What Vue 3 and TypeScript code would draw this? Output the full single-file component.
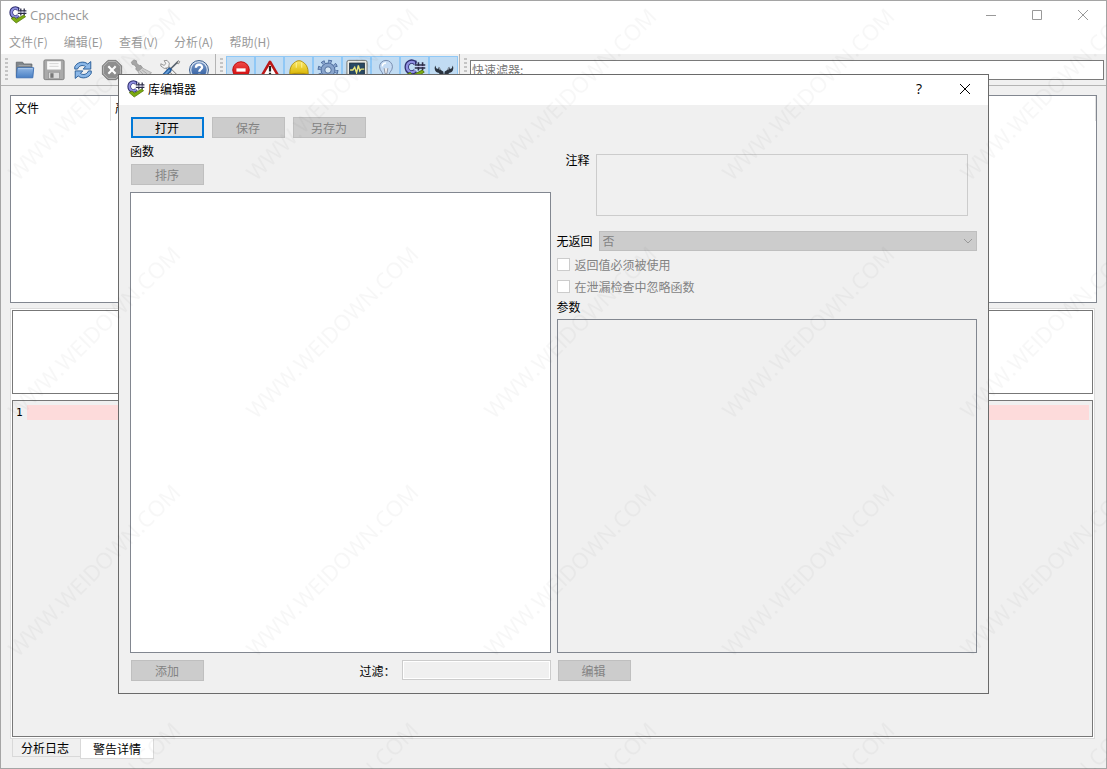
<script setup lang="ts">
import { ref } from 'vue'

interface ToolItem {
  icon: string
  label: string
}

const menus: string[] = ['文件(F)', '编辑(E)', '查看(V)', '分析(A)', '帮助(H)']

const actions: ToolItem[] = [
  { icon: 'folder', label: '打开' },
  { icon: 'save', label: '保存' },
  { icon: 'refresh', label: '重新检查' },
  { icon: 'stop', label: '停止' },
  { icon: 'brush', label: '清除' },
  { icon: 'tools', label: '首选项' },
  { icon: 'help', label: '帮助' },
]

const filters: ToolItem[] = [
  { icon: 'error', label: '错误' },
  { icon: 'warning', label: '警告' },
  { icon: 'helmet', label: '风格' },
  { icon: 'gear', label: '可移植性' },
  { icon: 'monitor', label: '性能' },
  { icon: 'bulb', label: '信息' },
  { icon: 'logo', label: 'C++' },
  { icon: 'bug', label: 'Cppcheck' },
]

const quickFilter = ref('')
const comment = ref('')
const filter = ref('')
const noReturn = ref('否')
</script>

<template>
  <svg class="defs" aria-hidden="true">
    <defs>
      <linearGradient id="g-blue" x1="0" y1="0" x2="0" y2="1">
        <stop offset="0" stop-color="#8fb5e3" /><stop offset="1" stop-color="#4a80c4" />
      </linearGradient>
      <linearGradient id="g-navy" x1="0" y1="0" x2="0" y2="1">
        <stop offset="0" stop-color="#7595c5" /><stop offset="1" stop-color="#2c5ba0" />
      </linearGradient>
      <linearGradient id="g-red" x1="0" y1="0" x2="0" y2="1">
        <stop offset="0" stop-color="#f04a4a" /><stop offset="1" stop-color="#cc0000" />
      </linearGradient>
      <linearGradient id="g-yellow" x1="0" y1="0" x2="0" y2="1">
        <stop offset="0" stop-color="#fbe96a" /><stop offset="1" stop-color="#d9b400" />
      </linearGradient>
    </defs>
    <symbol id="i-logo" viewBox="0 0 18 18">
      <path d="M9.4 3.6C6.5 .5 2.2 2.5 2.2 6.6S6.5 12.6 9.4 9.6" fill="none" stroke="#2f2f70" stroke-width="3.6" />
      <path d="M9.2 3.6C6.5 1 2.4 2.8 2.4 6.6S6.5 12 9.2 9.5" fill="none" stroke="#8f90e0" stroke-width="1.9" />
      <path d="M9.6 1.2v3.4" stroke="#2f2f70" stroke-width="1.2" />
      <path d="M11.8 2.6v6.8M15.2 2.6v6.8M8.8 4.9h8.6M8.8 7.3h8.6" stroke="#2c2c48" stroke-width="1.3" />
      <path d="M10.2 6.1h6.4" stroke="#c9c9ee" stroke-width=".8" />
      <path d="M2.2 12.6 5 10.9l2.4 2.2 7.4-4 1.8 1.6L7.2 17z" fill="#7cab12" stroke="#4f7209" stroke-width=".7" />
    </symbol>
    <symbol id="i-folder" viewBox="0 0 24 24">
      <path d="M2.5 19V3.5h7l1 2h9V19z" fill="#80868b" stroke="#666b70" />
      <path d="M5 7h13" stroke="#a9adb1" />
      <path d="M3.5 9.5h18L20.5 20.5h-18z" fill="url(#g-blue)" stroke="#3c6fb2" />
      <path d="M4.5 10.5h16" stroke="#b5d0ef" />
    </symbol>
    <symbol id="i-save" viewBox="0 0 24 24">
      <rect x="1" y="1" width="22" height="21.5" rx="1.5" fill="#aaa" stroke="#7d7d7d" />
      <rect x="4.5" y="2.5" width="15" height="9" fill="#fafafa" />
      <path d="M7 5h10M7 8h10" stroke="#d2d2d2" />
      <path d="M6 14.5h12v7H6z" fill="#dadada" stroke="#888" stroke-width=".7" />
      <rect x="8" y="15.5" width="3.5" height="5" fill="#777" />
    </symbol>
    <symbol id="i-refresh" viewBox="0 0 24 24">
      <path d="M3 11V8.5C5 3.8 12.5 1.4 17.2 5.5L20.5 2.8V11h-8.3l2.6-2.7C11.5 5.9 7.5 7.3 6 11z" fill="#8bb7e7" stroke="#245995" />
      <path d="M21 13v2.5c-2 4.7-9.5 7.1-14.2 3L3.5 21.2V13h8.3l-2.6 2.7c3.3 2.4 7.3 1 8.8-2.7z" fill="#8bb7e7" stroke="#245995" />
    </symbol>
    <symbol id="i-stop" viewBox="0 0 24 24">
      <path d="M7.5 1.5h9l6 6v9l-6 6h-9l-6-6v-9z" fill="#8f8f8f" stroke="#767676" />
      <path d="M8 2.7h8l5.3 5.3v8L16 21.3H8L2.7 16V8z" fill="none" stroke="#b8b8b8" />
      <path d="m8 8 8 8M16 8l-8 8" stroke="#fff" stroke-width="2.4" />
    </symbol>
    <symbol id="i-brush" viewBox="0 0 24 24">
      <path d="M1.5 3.5 4 1l3 1 .5 3L10 7l2 .2 1.5 2.3-4.6 4-2.6-2.2.5-2.3-2-2.5-2.3-.5z" fill="#a6a6a6" stroke="#8e8e8e" stroke-width=".8" />
      <path d="m8.7 13.7 4.7-4L23.5 15 13 22z" fill="#cfcfcf" stroke="#a2a2a2" stroke-width=".8" />
      <path d="m11 13 4.5 5M13.2 12l5.3 4" stroke="#aaa" />
    </symbol>
    <symbol id="i-tools" viewBox="0 0 24 24">
      <path d="m8 8 12 12" stroke="#777" stroke-width="4.4" stroke-linecap="round" />
      <path d="m8 8 12 12" stroke="#f0f0f0" stroke-width="2.8" stroke-linecap="round" />
      <path d="M2 5.2 5.5 7l2-2-1.9-3.2 3.2-.3 2.5 3-.8 4.8-4.7 1L2 7.7z" fill="#f4f4f4" stroke="#777" stroke-width=".8" />
      <path d="m21 2.5-8.8 8.7" stroke="#596470" stroke-width="1.8" />
      <path d="m21.2 1.7 1.5 1.3-1.3 2.2-1.9-.4z" fill="#ddd" stroke="#666" stroke-width=".7" />
      <path d="M11.5 12 5 18.8" stroke="#235998" stroke-width="5" stroke-linecap="round" />
      <path d="M11 12.4 5 18.5" stroke="#629bd5" stroke-width="2.2" stroke-linecap="round" />
    </symbol>
    <symbol id="i-help" viewBox="0 0 24 24">
      <circle cx="12" cy="12" r="10.3" fill="#d6e1ef" stroke="#294f83" />
      <circle cx="12" cy="12" r="8.4" fill="url(#g-navy)" />
      <path d="M8.6 9.5c.2-4.2 6.8-4.2 6.8-.6 0 2.2-3.1 2.3-3.1 5.1M12.3 16v2.3" fill="none" stroke="#fff" stroke-width="2.5" />
    </symbol>
    <symbol id="i-error" viewBox="0 0 24 24">
      <circle cx="12" cy="12" r="9" fill="url(#g-red)" stroke="#b00" />
      <rect x="7" y="10.2" width="10" height="3.6" fill="#fff" />
    </symbol>
    <symbol id="i-warning" viewBox="0 0 24 24">
      <path d="M12 3 22 20H2z" fill="#fff" stroke="#bb1717" stroke-width="2.8" stroke-linejoin="round" />
      <path d="M12 7.5v6M12 15v2" stroke="#222" stroke-width="2.4" />
    </symbol>
    <symbol id="i-helmet" viewBox="0 0 24 24">
      <path d="M2 17C1.5 8 5.5 4.5 8.5 3c1-1.5 6-1.5 7 0 3 1.5 7 5 6.5 14z" fill="url(#g-yellow)" stroke="#ad8b0b" />
      <path d="M9 3.5v6M15 3.5v6" fill="none" stroke="#fff4a5" />
      <path d="M1.5 17c6-2 15-2 21 0v2.5c-6 2-15 2-21 0z" fill="#ddb800" stroke="#ad8b0b" />
    </symbol>
    <symbol id="i-gear" viewBox="0 0 24 24">
      <circle cx="12" cy="12" r="9.2" fill="none" stroke="#3f5f92" stroke-width="4.2" stroke-dasharray="3.6 3.625" />
      <circle cx="12" cy="12" r="7.6" fill="#88a4cc" stroke="#3f5f92" />
      <circle cx="12" cy="12" r="9" fill="none" stroke="#88a4cc" stroke-width="3" stroke-dasharray="2.4 4.67" stroke-dashoffset="-.5" />
      <circle cx="12" cy="12" r="3.5" fill="#d8e8f5" stroke="#486896" />
    </symbol>
    <symbol id="i-monitor" viewBox="0 0 24 24">
      <rect x="1" y="1.5" width="22" height="20" rx="2" fill="#ecece6" stroke="#6d706c" />
      <rect x="4" y="4.5" width="16" height="14" fill="#294965" stroke="#17293a" />
      <path d="M4.5 12h3l2-3 2 6 2-8 1.5 6 1.5-2H20" fill="none" stroke="#efea7b" stroke-width="1.5" />
    </symbol>
    <symbol id="i-bulb" viewBox="0 0 24 24">
      <path d="M8.5 17c0-3-3.5-4.2-3.5-8.5a7 7 0 0 1 14 0c0 4.3-3.5 5.5-3.5 8.5z" fill="#c5dbf4" stroke="#7387aa" />
      <path d="M8 8a4 4 0 0 1 4-3.7" fill="none" stroke="#fff" stroke-width="1.6" />
      <path d="m10 10 1 6h2l1-6M8.5 18h7v3h-7z" fill="#eee" stroke="#8a91a0" />
    </symbol>
    <symbol id="i-bug" viewBox="0 0 24 24">
      <path d="M2.5 7C.8 10.500 2.500 14.500 6 15l4 4 2-1-.8-4.500L8.500 12 6.500 8.500l-1 2.500-2-.8z" fill="#2b3440" />
      <path d="M21.500 7c1.700 3.500 0 7.500-3.500 8l-4 4-2-1 .8-4.500 2.700-1.500 2-3.500 1 2.500 2-.8z" fill="#2b3440" />
      <path d="m6.500 9 1.500 3M17.500 9 16 12" stroke="#8996a3" stroke-width="1.500" />
    </symbol>
  </svg>

  <main class="window">
    <header class="titlebar">
      <svg class="logo"><use href="#i-logo" /></svg>
      <h1>Cppcheck</h1>
      <button class="caption" aria-label="最小化"><svg viewBox="0 0 12 12"><path d="M1 6.5h10" /></svg></button>
      <button class="caption" aria-label="最大化"><svg viewBox="0 0 12 12"><path d="M1.5 1.5h9v9h-9z" /></svg></button>
      <button class="caption" aria-label="关闭"><svg viewBox="0 0 12 12"><path d="m1 1 10 10M11 1 1 11" /></svg></button>
    </header>

    <nav class="menubar">
      <button v-for="m in menus" :key="m">{{ m }}</button>
    </nav>

    <div class="toolbar">
      <span class="grip"></span>
      <button v-for="a in actions" :key="a.icon" class="tool" :aria-label="a.label">
        <svg><use :href="'#i-' + a.icon" /></svg>
      </button>
      <span class="divider"></span>
      <span class="grip"></span>
      <button v-for="f in filters" :key="f.icon" class="tool checked" aria-pressed="true" :aria-label="f.label">
        <svg><use :href="'#i-' + f.icon" /></svg>
      </button>
      <span class="divider"></span>
      <span class="grip"></span>
      <input v-model="quickFilter" class="quick" type="text" placeholder="快速滤器:" aria-label="快速滤器" />
    </div>

    <section class="workspace">
      <div class="results">
        <table>
          <thead>
            <tr><th class="file">文件</th><th>严重性</th></tr>
          </thead>
        </table>
      </div>
      <div class="details">
        <div class="message"></div>
        <div class="code">
          <span class="line-no">1</span>
          <span class="line"></span>
        </div>
      </div>
      <div class="tabs" role="tablist">
        <button role="tab" aria-selected="false">分析日志</button>
        <button role="tab" aria-selected="true" class="active">警告详情</button>
      </div>
    </section>
  </main>

  <section class="dialog" role="dialog" aria-labelledby="dialog-title">
    <header class="titlebar">
      <svg class="logo"><use href="#i-logo" /></svg>
      <h2 id="dialog-title">库编辑器</h2>
      <button class="caption help" aria-label="帮助">?</button>
      <button class="caption" aria-label="关闭"><svg viewBox="0 0 12 12"><path d="m1 1 10 10M11 1 1 11" /></svg></button>
    </header>
    <div class="dialog-body">
      <div class="button-row">
        <button class="push default">打开</button>
        <button class="push" disabled>保存</button>
        <button class="push" disabled>另存为</button>
      </div>
      <div class="columns">
        <div class="column">
          <span class="functions">函数</span>
          <button class="push inset" disabled>排序</button>
          <div class="list functions-list"></div>
          <div class="footer">
            <button class="push inset" disabled>添加</button>
            <label class="filter" for="filter">过滤：</label>
            <input id="filter" v-model="filter" class="filter-box" type="text" disabled />
          </div>
        </div>
        <div class="column">
          <div class="comment-row">
            <label for="comment">注释</label>
            <textarea id="comment" v-model="comment" disabled></textarea>
          </div>
          <div class="return-row">
            <label for="noreturn">无返回</label>
            <div class="combo">
              <select id="noreturn" v-model="noReturn" disabled>
                <option>否</option>
                <option>是</option>
              </select>
              <svg viewBox="0 0 10 6"><path d="m1 1 4 4 4-4" /></svg>
            </div>
          </div>
          <label class="check"><input type="checkbox" disabled />返回值必须被使用</label>
          <label class="check"><input type="checkbox" disabled />在泄漏检查中忽略函数</label>
          <span class="arguments">参数</span>
          <div class="list"></div>
          <div class="footer">
            <button class="push inset" disabled>编辑</button>
          </div>
        </div>
      </div>
    </div>
  </section>

  <svg class="watermark" aria-hidden="true">
    <defs>
      <pattern id="mark" width="238" height="238" patternUnits="userSpaceOnUse">
        <text transform="translate(18 182) rotate(-45)">WWW.WEIDOWN.COM</text>
      </pattern>
    </defs>
    <rect width="100%" height="100%" fill="url(#mark)" />
  </svg>
</template>

<style>
body {
  margin: 0;
  background: #efefef;
  overflow: hidden;
}
</style>

<style scoped>
.window,
.dialog,
.window *,
.dialog * {
  box-sizing: border-box;
}
.window,
.dialog {
  font: 12px/16px "Noto Sans CJK SC", sans-serif;
  color: #000;
  background: #f0f0f0;
}
button,
input,
select,
textarea {
  font: inherit;
  color: inherit;
  margin: 0;
  padding: 0;
  border: 0;
  border-radius: 0;
  background: none;
}
.defs {
  position: absolute;
  width: 0;
  height: 0;
}
.window {
  display: flex;
  flex-direction: column;
  height: 100vh;
  border: 1px solid #a5a5a5;
}
.titlebar {
  display: flex;
  align-items: center;
  height: 30px;
  padding: 0 0 2px 8px;
  background: #fff;
}
.logo {
  width: 18px;
  height: 18px;
}
h1,
h2 {
  flex: 1;
  margin: 0 0 0 3px;
  font-size: 12px;
  font-weight: 400;
}
h1 {
  font: 13px/16px "Open Sans", sans-serif;
  color: #999;
}
.caption {
  display: flex;
  align-items: center;
  justify-content: center;
  width: 46px;
  height: 28px;
}
.caption svg {
  width: 12px;
  height: 12px;
  fill: none;
  stroke: #999;
}
.dialog .caption svg {
  stroke: #000;
}
.help {
  font: 14px/16px "Open Sans", sans-serif;
}
.menubar {
  display: flex;
  gap: 16px;
  height: 23px;
  padding: 0 8px 2px;
  background: #fff;
  color: #999;
}
.toolbar {
  display: flex;
  align-items: center;
  height: 32px;
  padding: 0 2px 0 3px;
  border-bottom: 1px solid #b4b4b4;
}
.grip {
  width: 3px;
  height: 23px;
  margin: 0 3px 0 1px;
  background: repeating-linear-gradient(#c4c4c4 0 2px, transparent 2px 4px);
}
.tool {
  display: flex;
  align-items: center;
  justify-content: center;
  width: 29px;
  height: 28px;
}
.tool svg {
  width: 22px;
  height: 22px;
  margin-right: 1px;
}
.checked {
  background: #c1dcf3;
  border: 1px solid #90c8f6;
}
.checked svg {
  margin-right: 0;
}
.divider {
  align-self: stretch;
  width: 1px;
  margin: 0 3px 0 1px;
  background: #b4b4b4;
}
.quick {
  flex: 1;
  min-width: 0;
  height: 20px;
  padding-left: 1px;
  border: 1px solid #7a7a7a;
  background: #fff;
}
.quick::placeholder {
  color: #777;
  opacity: 1;
}
.workspace {
  flex: 1;
  display: flex;
  flex-direction: column;
  min-height: 0;
  padding: 9px;
}
.results {
  flex: 208 1 0;
  border: 1px solid #828790;
  background: #fff;
}
table {
  width: 100%;
  border-spacing: 0;
}
th {
  height: 25px;
  padding: 0 4px 2px;
  border-right: 1px solid #e2e2e2;
  font-weight: 400;
  text-align: left;
}
.file {
  width: 100px;
}
.details {
  flex: 431 1 0;
  display: flex;
  flex-direction: column;
  gap: 6px;
  margin: 5px 2px 0 0;
  padding: 1px;
  border: 1px solid #dcdcdc;
  background: #fff;
}
.message {
  height: 84px;
  border: 1px solid #777;
}
.code {
  flex: 1;
  display: flex;
  padding: 4px 3px;
  border: 1px solid #777;
  background: #f0f0f0;
}
.line-no {
  width: 11px;
  font: 11px/16px "DejaVu Sans Mono", monospace;
}
.line {
  flex: 1;
  height: 15px;
  background: #fddbdb;
}
.tabs {
  display: flex;
  align-items: flex-start;
  height: 20px;
  padding-left: 2px;
}
.tabs button {
  height: 18px;
  padding: 0 11px 0 8px;
  border: solid #d9d9d9;
  border-width: 0 0 1px 1px;
}
.tabs .active {
  height: 20px;
  padding: 0 12px;
  border-right-width: 1px;
  background: #fff;
}
.dialog {
  position: absolute;
  inset: 74px 118px 75px;
  display: flex;
  flex-direction: column;
  border: 1px solid #6a6a6a;
}
.dialog-body {
  flex: 1;
  display: flex;
  flex-direction: column;
  padding: 12px 11px;
}
.button-row {
  display: flex;
  gap: 8px;
  padding-left: 1px;
}
.push {
  flex: none;
  width: 73px;
  height: 21px;
  padding-right: 1px;
  border: 1px solid #bfbfbf;
  background: #ccc;
  color: #838383;
  line-height: 18px;
}
.default {
  border: 2px solid #0078d7;
  background: #e1e1e1;
  color: #000;
}
.inset {
  margin-left: 1px;
}
.columns {
  flex: 1;
  display: grid;
  grid-template-columns: 1fr 1fr;
  gap: 6px;
}
.column {
  display: flex;
  flex-direction: column;
  min-width: 0;
}
.functions {
  margin: 5px 0;
}
.list {
  flex: 1;
  border: 1px solid #828790;
}
.functions-list {
  margin-top: 7px;
  background: #fff;
}
.footer {
  display: flex;
  margin-top: 7px;
  height: 21px;
}
.filter {
  margin: 3px 6px 0 auto;
}
.filter-box {
  width: 149px;
  height: 20px;
  border: 1px solid #ccc;
  box-shadow: inset 0 0 0 1px #fff;
}
.comment-row {
  display: flex;
  gap: 6px;
  margin: 16px 9px 15px;
}
.comment-row label {
  margin-top: -2px;
}
textarea {
  flex: 1;
  min-width: 0;
  height: 62px;
  border: 1px solid #ccc;
  resize: none;
}
.return-row {
  display: flex;
  align-items: center;
  gap: 6px;
  height: 20px;
  margin-bottom: 3px;
}
.combo {
  flex: 1;
  display: grid;
  align-items: center;
}
select {
  grid-area: 1 / 1;
  width: 100%;
  height: 20px;
  padding-left: 3px;
  border: 1px solid #bfbfbf;
  background: #ccc;
  color: #838383;
  opacity: 1;
  appearance: none;
}
.combo svg {
  grid-area: 1 / 1;
  justify-self: end;
  width: 10px;
  height: 6px;
  margin-right: 4px;
  fill: none;
  stroke: #999;
  pointer-events: none;
}
.check {
  display: flex;
  align-items: center;
  gap: 5px;
  height: 22px;
  color: #838383;
}
.check input {
  width: 13px;
  height: 13px;
  margin-bottom: 1px;
  border: 1px solid #ccc;
  background: #fff;
  appearance: none;
}
.arguments {
  margin: 1px 0 4px;
}
.watermark {
  position: absolute;
  inset: 0;
  width: 100%;
  height: 100%;
  pointer-events: none;
}
.watermark text {
  font: 22px "Open Sans", sans-serif;
  fill: #000;
  fill-opacity: 0.03;
}
</style>
